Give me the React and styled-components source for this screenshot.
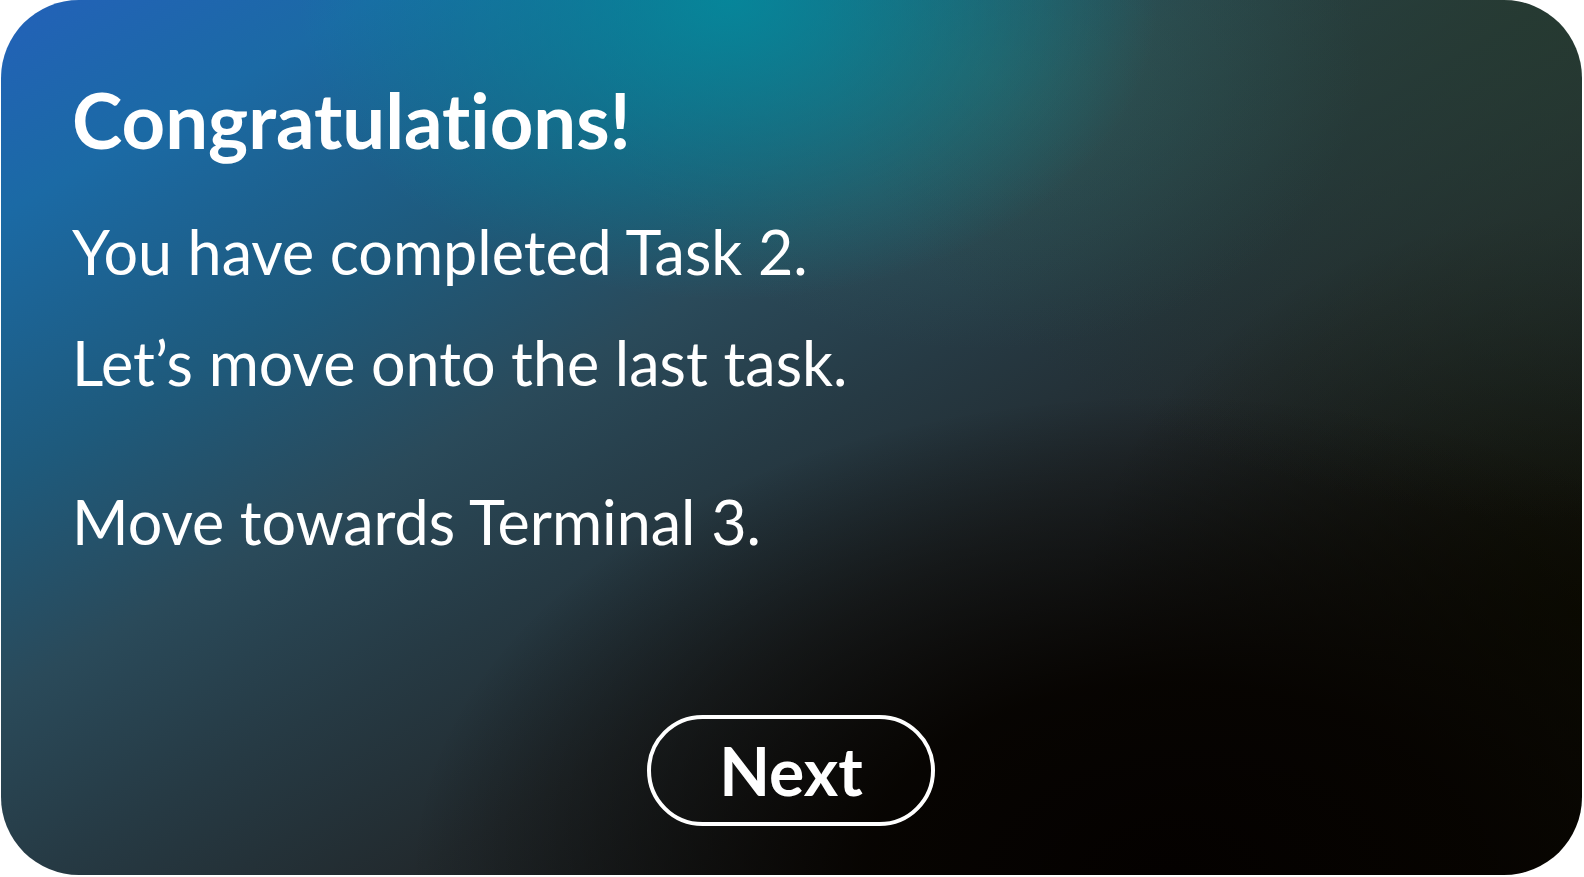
import React from 'react'
import styled, { createGlobalStyle } from 'styled-components'

const GlobalStyle = createGlobalStyle`
  html, body {
    margin: 0;
    padding: 0;
    background: #ffffff;
  }
  body {
    font-family: Lato, "Open Sans", "Liberation Sans", sans-serif;
    font-variant-ligatures: none;
  }
`

export default function App() {
  return (
    <>
      <GlobalStyle />
      <Page>
        <Card>
          <Title>Congratulations!</Title>
          <Message>
            <Line>You have completed Task 2.</Line>
            <Line>Let’s move onto the last task.</Line>
          </Message>
          <Message $gap={48}>
            <Line>Move towards Terminal 3.</Line>
          </Message>
          <Footer>
            <NextButton type="button">Next</NextButton>
          </Footer>
        </Card>
      </Page>
    </>
  )
}

const Page = styled.div`
  width: 1584px;
  height: 877px;
  padding: 0 2px 2px 1px;
  box-sizing: border-box;
  display: flex;
`

const Card = styled.div`
  flex: 1;
  display: flex;
  flex-direction: column;
  padding: 80px 72px 49px 71px;
  box-sizing: border-box;
  border-radius: 78px;
  overflow: hidden;
  color: #ffffff;
  background:
    radial-gradient(ellipse 430px 300px at 46% 0%, rgba(2, 140, 158, 0.85), rgba(2, 140, 158, 0) 100%),
    radial-gradient(ellipse 380px 280px at 62% 8%, rgba(52, 110, 100, 0.4), rgba(52, 110, 100, 0) 100%),
    radial-gradient(ellipse 760px 520px at 100% 0%, rgba(38, 58, 46, 0.85), rgba(38, 58, 46, 0) 100%),
    radial-gradient(ellipse 760px 480px at 74% 100%, rgba(4, 1, 0, 1) 0%, rgba(6, 3, 0, 0.95) 40%, rgba(6, 3, 0, 0) 100%),
    radial-gradient(ellipse 500px 400px at 100% 70%, rgba(12, 12, 0, 0.9), rgba(12, 12, 0, 0) 100%),
    linear-gradient(150deg,
      #2361b9 0%,
      #1b6aa5 12%,
      #1e5a7c 27%,
      #2a4a5a 39%,
      #263a44 50%,
      #222a2e 62%,
      #1a1d1e 76%,
      #0c0b04 100%);
`

const Title = styled.h1`
  margin: 0;
  font-size: 76px;
  line-height: 80px;
  font-weight: 700;
`

const Message = styled.div`
  display: flex;
  flex-direction: column;
  margin-top: ${(p) => (p.$gap ?? 36)}px;
`

const Line = styled.p`
  margin: 0;
  font-size: 61px;
  line-height: 111px;
  font-weight: 400;
  white-space: nowrap;
`

const Footer = styled.div`
  margin-top: auto;
  display: flex;
  justify-content: center;
`

const NextButton = styled.button`
  width: 288px;
  height: 111px;
  border: 4px solid #ffffff;
  border-radius: 56px;
  background: transparent;
  color: #ffffff;
  font-family: Lato, "Open Sans", sans-serif;
  font-size: 66px;
  font-weight: 700;
  line-height: 1;
  padding: 0;
  cursor: pointer;
`
